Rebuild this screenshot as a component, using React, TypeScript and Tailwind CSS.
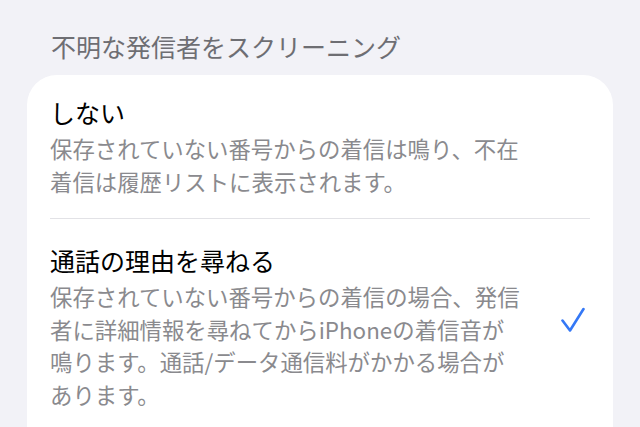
import React from "react";

const font = { fontFamily: '"Noto Sans CJK JP", "Noto Sans", sans-serif' };

export default function App() {
  return (
    <div
      className="w-[640px] h-[427px] overflow-hidden bg-[#f2f2f7] pt-[30px] px-[27px]"
      style={font}
    >
      <div className="pl-[24px] text-[25px] leading-[33px] text-[#6e6e73] whitespace-nowrap">
        不明な発信者をスクリーニング
      </div>
      <div className="mt-[12px] w-[586px] bg-white rounded-[30px] pl-[23px] h-[400px]">
        <div className="pt-[20px] pb-[21px] pr-[23px]">
          <div className="text-[25px] leading-[34px] text-black whitespace-nowrap">しない</div>
          <div className="mt-[3px] text-[22.4px] leading-[32.5px] text-[#8a8a8e] whitespace-nowrap">
            保存されていない番号からの着信は鳴り、不在
            <br />
            着信は履歴リストに表示されます。
          </div>
        </div>
        <div className="mr-[23px] h-px bg-[#e2e2e6]" />
        <div className="pt-[24px] pr-[28px] flex items-center justify-between">
          <div>
            <div className="text-[25px] leading-[34px] text-black whitespace-nowrap">通話の理由を尋ねる</div>
            <div className="mt-[3px] text-[22.4px] leading-[32.5px] text-[#8a8a8e] whitespace-nowrap">
              保存されていない番号からの着信の場合、発信
              <br />
              者に詳細情報を尋ねてからiPhoneの着信音が
              <br />
              鳴ります。通話/データ通信料がかかる場合が
              <br />
              あります。
            </div>
          </div>
          <svg width="24" height="26" viewBox="0 0 24 26" className="mt-[-14px]">
            <path
              d="M1.5 13.5 L9 23.5 L22.5 2"
              fill="none"
              stroke="#3478f6"
              strokeWidth="2.6"
              strokeLinecap="round"
              strokeLinejoin="round"
            />
          </svg>
        </div>
      </div>
    </div>
  );
}
